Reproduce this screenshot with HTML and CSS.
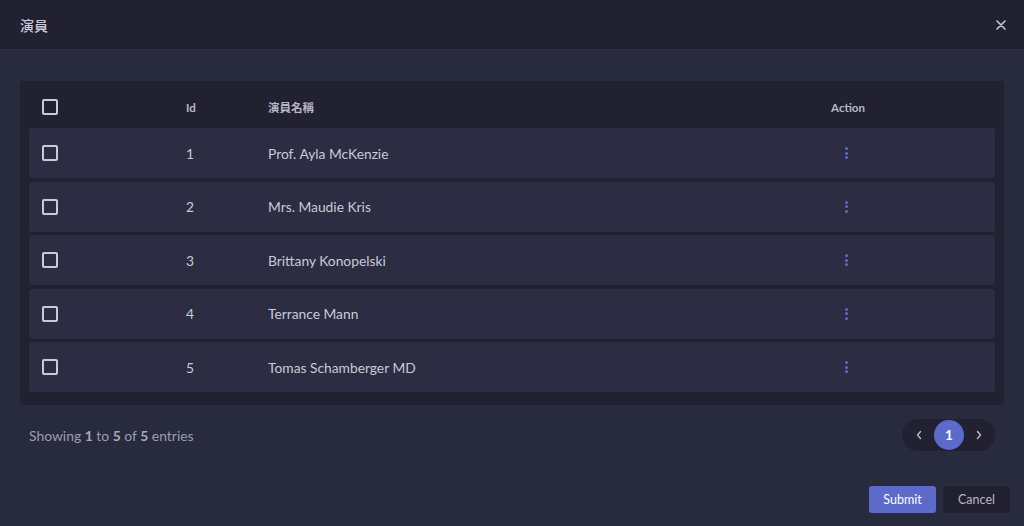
FILE: index.html
```html
<!DOCTYPE html>
<html lang="zh-Hant">
<head>
<meta charset="utf-8">
<title>演員</title>
<link rel="stylesheet" href="styles.css">
</head>
<body>
<div class="modal">
  <header class="modal-header">
    <h1 class="modal-title">演員</h1>
    <button class="close" aria-label="close">
      <svg width="10" height="10" viewBox="0 0 10 10"><path d="M1 1L9 9M9 1L1 9" stroke="#c9cad6" stroke-width="1.6" stroke-linecap="round"/></svg>
    </button>
  </header>
  <main class="modal-body">
    <div class="table">
      <div class="row head">
        <div class="cell"><span class="check"></span></div>
        <div class="cell">Id</div>
        <div class="cell">演員名稱</div>
        <div class="cell center">Action</div>
        <div class="cell"></div>
      </div>
      <div class="row">
        <div class="cell"><span class="check"></span></div>
        <div class="cell">1</div>
        <div class="cell">Prof. Ayla McKenzie</div>
        <div class="cell center"><span class="dots"><i></i><i></i><i></i></span></div>
        <div class="cell"></div>
      </div>
      <div class="row">
        <div class="cell"><span class="check"></span></div>
        <div class="cell">2</div>
        <div class="cell">Mrs. Maudie Kris</div>
        <div class="cell center"><span class="dots"><i></i><i></i><i></i></span></div>
        <div class="cell"></div>
      </div>
      <div class="row">
        <div class="cell"><span class="check"></span></div>
        <div class="cell">3</div>
        <div class="cell">Brittany Konopelski</div>
        <div class="cell center"><span class="dots"><i></i><i></i><i></i></span></div>
        <div class="cell"></div>
      </div>
      <div class="row">
        <div class="cell"><span class="check"></span></div>
        <div class="cell">4</div>
        <div class="cell">Terrance Mann</div>
        <div class="cell center"><span class="dots"><i></i><i></i><i></i></span></div>
        <div class="cell"></div>
      </div>
      <div class="row">
        <div class="cell"><span class="check"></span></div>
        <div class="cell">5</div>
        <div class="cell">Tomas Schamberger MD</div>
        <div class="cell center"><span class="dots"><i></i><i></i><i></i></span></div>
        <div class="cell"></div>
      </div>
    </div>
    <div class="table-footer">
      <div class="info">Showing <b>1</b> to <b>5</b> of <b>5</b> entries</div>
      <div class="pager">
        <span class="pg-arrow"><svg width="8" height="10" viewBox="0 0 8 10"><path d="M5.5 1.5L2.5 5L5.5 8.5" fill="none" stroke="#b9bac8" stroke-width="1.4" stroke-linecap="round" stroke-linejoin="round"/></svg></span>
        <span class="pg-num">1</span>
        <span class="pg-arrow"><svg width="8" height="10" viewBox="0 0 8 10"><path d="M2.5 1.5L5.5 5L2.5 8.5" fill="none" stroke="#b9bac8" stroke-width="1.4" stroke-linecap="round" stroke-linejoin="round"/></svg></span>
      </div>
    </div>
  </main>
  <footer class="modal-footer">
    <button class="btn primary">Submit</button>
    <button class="btn secondary">Cancel</button>
  </footer>
</div>
</body>
</html>
```

FILE: styles.css
```css
* { box-sizing: border-box; }
html, body { margin: 0; padding: 0; }
body {
  width: 1024px;
  height: 526px;
  background: #282a3e;
  font-family: "Lato", "Noto Sans CJK TC", sans-serif;
  color: #c9cad6;
  overflow: hidden;
}
.modal { display: flex; flex-direction: column; height: 526px; }
.modal-header {
  height: 50px;
  background: #222132;
  border-bottom: 1px solid #2e2f45;
  display: flex;
  align-items: center;
  justify-content: space-between;
  padding: 0 17px 0 20px;
}
.modal-title {
  margin: 0;
  font-family: "Noto Sans CJK TC", sans-serif;
  font-size: 14px;
  font-weight: 500;
  color: #c9cad6;
}
.close {
  background: none;
  border: 0;
  padding: 0;
  width: 12px;
  height: 12px;
  display: flex;
  align-items: center;
  justify-content: center;
}
.modal-body { padding: 31px 20px 0 20px; }
.table {
  background: #222131;
  padding: 0 9px 13px 9px;
  display: flex;
  flex-direction: column;
  gap: 3.5px;
}
.row {
  display: grid;
  grid-template-columns: 157px 82px 550px 60px 1fr;
  align-items: center;
  height: 50px;
  background: #2c2d43;
  border-radius: 3px;
  font-size: 13.8px;
  color: #c9cad6;
}
.row.head {
  height: 43.5px;
  padding-top: 9px;
  background: transparent;
  font-size: 11.5px;
  font-weight: 700;
  color: #b7b8c6;
}
.row.head .cell:nth-child(3) { font-family: "Noto Sans CJK TC", sans-serif; font-weight: 700; }
.cell:first-child { padding-left: 13px; display: flex; align-items: center; }
.center { display: flex; justify-content: center; }
.check {
  display: block;
  width: 16px;
  height: 16px;
  border: 2px solid #c9cad6;
  border-radius: 2px;
}
.dots { display: flex; flex-direction: column; gap: 1.5px; margin-left: -3px; }
.dots i { display: block; width: 3px; height: 3px; border-radius: 50%; background: #5c6bc9; }
.table-footer {
  display: flex;
  justify-content: space-between;
  align-items: center;
  padding: 14px 9px 0 9px;
}
.info { font-size: 13.9px; color: #9c9daf; }
.info b { font-weight: 700; color: #a8a9ba; }
.pager {
  display: flex;
  align-items: center;
  background: #222131;
  border-radius: 16px;
  height: 32px;
  padding: 0 1px 0 2px;
}
.pg-arrow { width: 30px; height: 30px; display: flex; align-items: center; justify-content: center; }
.pg-num {
  width: 30px;
  height: 30px;
  border-radius: 50%;
  background: #5c6bc9;
  color: #fff;
  font-weight: 700;
  font-size: 13.5px;
  display: flex;
  align-items: center;
  justify-content: center;
}
.modal-footer {
  margin-top: auto;
  display: flex;
  justify-content: flex-end;
  gap: 7px;
  padding: 0 14px 13px 0;
}
.btn {
  width: 67px;
  height: 27px;
  border: 0;
  border-radius: 3px;
  font-family: "Lato", sans-serif;
  font-size: 12.5px;
}
.btn.primary { background: #5c6bc9; color: #fff; }
.btn.secondary { background: #212030; color: #b7b8c6; }
```
